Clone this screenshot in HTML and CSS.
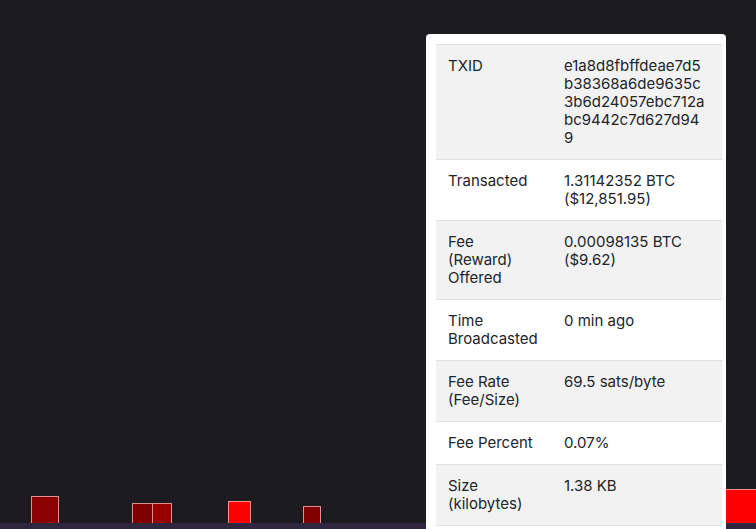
FILE: index.html
```html
<!DOCTYPE html>
<html lang="en">
<head>
    <meta charset="UTF-8">
    <meta name="viewport" content="width=device-width, initial-scale=1.0">
    <title>Mempool</title>
    <link rel="stylesheet" href="styles.css">
</head>
<body>
    <div class="stage">
        <!-- pending transactions -->
        <div class="tx tx1"></div>
        <div class="tx tx2"></div>
        <div class="tx tx3"></div>
        <div class="tx tx4"></div>
        <div class="tx tx5"></div>
        <div class="tx tx6"></div>
        <div class="floor"></div>

        <div class="card">
            <table class="details">
                <colgroup>
                    <col class="key">
                    <col>
                </colgroup>
                <tr>
                    <td>TXID</td>
                    <td class="hash">e1a8d8fbffdeae7d5b38368a6de9635c3b6d24057ebc712abc9442c7d627d949</td>
                </tr>
                <tr>
                    <td>Transacted</td>
                    <td>1.31142352 BTC ($12,851.95)</td>
                </tr>
                <tr>
                    <td>Fee (Reward) Offered</td>
                    <td>0.00098135 BTC ($9.62)</td>
                </tr>
                <tr>
                    <td>Time Broadcasted</td>
                    <td>0 min ago</td>
                </tr>
                <tr>
                    <td>Fee Rate (Fee/Size)</td>
                    <td>69.5 sats/byte</td>
                </tr>
                <tr>
                    <td>Fee Percent</td>
                    <td>0.07%</td>
                </tr>
                <tr>
                    <td>Size (kilobytes)</td>
                    <td>1.38 KB</td>
                </tr>
            </table>
        </div>
    </div>
</body>
</html>
```

FILE: styles.css
```css
  body{
     margin: 0;
     background-color: #1c1b20;
     font-family: Inter, "Liberation Sans", sans-serif;
     overflow: hidden;
  }

  .stage{
     position: relative;
     width: 756px;
     height: 529px;
     overflow: hidden;
  }

  .floor{
     position: absolute;
     left: 0;
     right: 0;
     bottom: 0;
     height: 6px;
     background-color: #2f2640;
  }

  .tx{
     position: absolute;
     box-sizing: border-box;
     border: 1px solid rgba(255, 190, 190, 0.75);
  }
  .tx1{ left: 31px; top: 496px; width: 28px; height: 28px; background-color: #8b0000; }
  .tx2{ left: 132px; top: 503px; width: 21px; height: 21px; background-color: #7e0000; }
  .tx3{ left: 152px; top: 503px; width: 20px; height: 21px; background-color: #980000; }
  .tx4{ left: 228px; top: 501px; width: 23px; height: 23px; background-color: #ff0000; }
  .tx5{ left: 303px; top: 506px; width: 18px; height: 18px; background-color: #800000; }
  .tx6{ left: 712px; top: 489px; width: 50px; height: 35px; background-color: #ff0000; }

  .card{
     position: absolute;
     left: 426px;
     top: 34px;
     width: 300px;
     height: 520px;
     box-sizing: border-box;
     padding: 10px 4px 0 10px;
     background-color: #fff;
     border-radius: 4px;
  }

  .details{
     width: 100%;
     table-layout: fixed;
     border-collapse: collapse;
     color: #212529;
     font-size: 15px;
     line-height: 18px;
     border-bottom: 1px solid #dee2e6;
  }
  .details .key{
     width: 116px;
  }
  .details td{
     padding: 12px;
     vertical-align: top;
     border-top: 1px solid #dee2e6;
  }
  .details tr:nth-child(odd){
     background-color: #f2f2f2;
  }
  .details .hash{
     padding-right: 17px;
     word-break: break-all;
  }
```
